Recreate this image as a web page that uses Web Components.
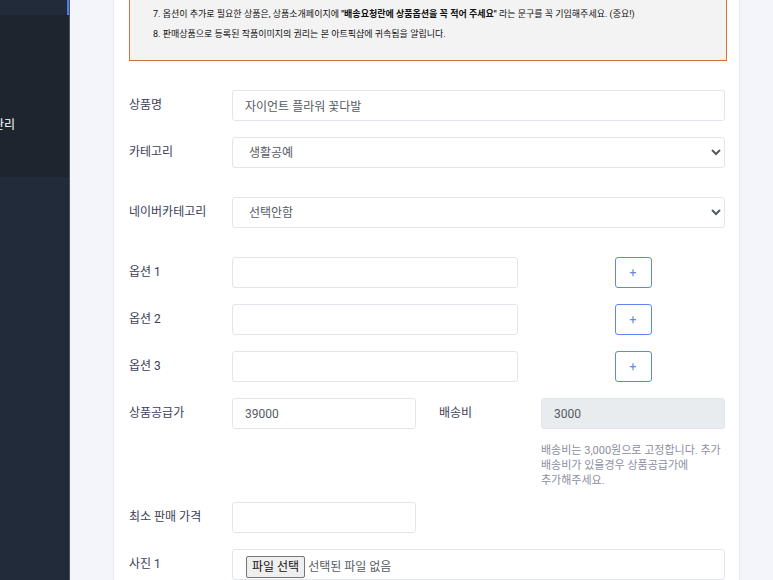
<!DOCTYPE html>
<html lang="ko">
<head>
<meta charset="utf-8">
<meta name="viewport" content="width=device-width, initial-scale=1">
<title>상품 등록</title>
<style>
    body {
        margin: 0;
        background: #f3f5fa;
        color: #495057;
        font-family: Roboto, "Noto Sans CJK KR", sans-serif;
        font-size: 12px;
    }
</style>
</head>
<body>
<admin-layout>
    <side-menu slot="menu">관리</side-menu>
    <notice-box>
        <p>7. 옵션이 추가로 필요한 상품은, 상품소개페이지에 <b>"배송요청란에 상품옵션을 꼭 적어 주세요"</b> 라는 문구를 꼭 기입해주세요. (중요!)</p>
        <p>8. 판매상품으로 등록된 작품이미지의 권리는 본 아트픽샵에 귀속됨을 알립니다.</p>
    </notice-box>
    <product-form></product-form>
</admin-layout>

<script>
class AdminLayout extends HTMLElement {
    constructor() {
        super();
        this.attachShadow({ mode: 'open' });
        this.shadowRoot.innerHTML = `
        <style>
            :host {
                display: flex;
                min-height: 100vh;
            }

            main {
                flex: 1;
                min-width: 0;
                padding: 0 33px 0 43px;
            }

            .card {
                min-height: 100vh;
                box-sizing: border-box;
                padding: 0 12px 0 15px;
                background: #fff;
                border: 1px solid #e6eaf2;
                border-width: 0 1px;
            }
        </style>

        <slot name="menu"></slot>
        <main>
            <div class="card"><slot></slot></div>
        </main>
`
    }
}

class SideMenu extends HTMLElement {
    constructor() {
        super();
        this.attachShadow({ mode: 'open' });
        this.shadowRoot.innerHTML = `
        <style>
            :host {
                display: block;
                flex: none;
                width: 69px;
                overflow: hidden;
                background: #222b3a;
                border-right: 1px solid #4b515c;
            }

            .active {
                height: 15px;
                border-right: 2px solid #4c7cf0;
            }

            .submenu {
                display: flex;
                justify-content: flex-end;
                padding: 101px 54px 42px 0;
                background: #1e252f;
            }

            a {
                color: #fff;
                line-height: 19px;
                text-decoration: none;
                white-space: nowrap;
            }
        </style>

        <div class="active"></div>
        <nav class="submenu"><a href="#"><slot></slot></a></nav>
`
    }
}

class NoticeBox extends HTMLElement {
    constructor() {
        super();
        this.attachShadow({ mode: 'open' });
        this.shadowRoot.innerHTML = `
        <style>
            :host {
                display: block;
                padding: 4px 23px 16px;
                background: #f3f3f3;
                border: 1px solid #d0713a;
                border-top: 0;
                color: #111;
                font-size: 9px;
                line-height: 20px;
            }

            ::slotted(p) {
                margin: 0;
            }
        </style>

        <slot></slot>
`
    }
}

// type: text (default), select, file
class FormField extends HTMLElement {
    constructor() {
        super();
        this.attachShadow({ mode: 'open' });
    }

    connectedCallback() {
        const label = this.getAttribute('label');
        this.shadowRoot.innerHTML = `
        <style>
            :host {
                display: grid;
                grid-column: span 4;
                grid-template-columns: subgrid;
                align-items: start;
            }

            :host([half]) {
                grid-column: span 2;
            }

            :host([spaced]) {
                margin-bottom: 13px;
            }

            .label {
                color: #3c4058;
                line-height: 31px;
                white-space: nowrap;
            }

            .control {
                grid-column: 2 / -1;
                min-width: 0;
            }

            :host([action]) .control {
                grid-column: 2 / 4;
            }

            :host([short]) .control {
                grid-column: 2 / 3;
            }

            input[type=text], select, .file {
                box-sizing: border-box;
                display: block;
                width: 100%;
                height: 31px;
                margin: 0;
                padding: 0 12px;
                background: #fff;
                border: 1px solid #e2e5ec;
                border-radius: 3px;
                color: #545b62;
                font: inherit;
            }

            select {
                padding-right: 0;
            }

            input[type=text]:disabled {
                background: #e9ecef;
            }

            .file {
                display: flex;
                align-items: flex-end;
                gap: 3px;
                padding: 0 13px 1px;
                line-height: 20px;
            }

            .file input {
                position: absolute;
                width: 1px;
                height: 1px;
                opacity: 0;
            }

            .choose {
                padding: 0 5px;
                background: #efefef;
                border: 1px solid #767676;
                border-radius: 2px;
                color: #111;
            }

            .status {
                padding-bottom: 1px;
            }
        </style>

        <label class="label" for="field">${label}</label>
        <div class="control">${this.control()}<slot name="help"></slot></div>
        <slot></slot>
`
    }

    control() {
        const value = this.getAttribute('value') || '';
        switch (this.getAttribute('type')) {
            case 'select':
                return `<select id="field"><option>${value}</option></select>`;
            case 'file':
                return `<div class="file"><input type="file" id="field"><label class="choose" for="field">파일 선택</label><span class="status">선택된 파일 없음</span></div>`;
            default:
                return `<input type="text" id="field" value="${value}"${this.hasAttribute('disabled') ? ' disabled' : ''}>`;
        }
    }
}

class AddButton extends HTMLElement {
    constructor() {
        super();
        this.attachShadow({ mode: 'open' });
        this.shadowRoot.innerHTML = `
        <style>
            :host {
                display: block;
                justify-self: center;
            }

            button {
                display: block;
                width: 37px;
                height: 31px;
                padding: 0;
                background: #fff;
                border: 1px solid #5d87ec;
                border-radius: 3px;
                color: #6484e8;
                font: inherit;
            }
        </style>

        <button type="button">+</button>
`
    }
}

class ProductForm extends HTMLElement {
    constructor() {
        super();
        this.attachShadow({ mode: 'open' });
        this.shadowRoot.innerHTML = `
        <style>
            :host {
                display: block;
                padding: 29px 2px 0 0;
            }

            form {
                display: grid;
                grid-template-columns: 80fr 184fr 79fr 184fr;
                gap: 16px 23px;
            }

            .help {
                margin: 14px 0 -2px;
                color: #8b8fa3;
                font-size: 11px;
                line-height: 15px;
                word-break: keep-all;
            }
        </style>

        <form>
            <form-field label="상품명" value="자이언트 플라워 꽃다발"></form-field>
            <form-field label="카테고리" type="select" value="생활공예" spaced></form-field>
            <form-field label="네이버카테고리" type="select" value="선택안함" spaced></form-field>
            <form-field label="옵션 1" action><add-button></add-button></form-field>
            <form-field label="옵션 2" action><add-button></add-button></form-field>
            <form-field label="옵션 3" action><add-button></add-button></form-field>
            <form-field label="상품공급가" value="39000" half></form-field>
            <form-field label="배송비" value="3000" half disabled>
                <p class="help" slot="help">배송비는 3,000원으로 고정합니다. 추가 배송비가 있을경우 상품공급가에 추가해주세요.</p>
            </form-field>
            <form-field label="최소 판매 가격" short></form-field>
            <form-field label="사진 1" type="file"></form-field>
        </form>
`
    }
}

customElements.define('admin-layout', AdminLayout);
customElements.define('side-menu', SideMenu);
customElements.define('notice-box', NoticeBox);
customElements.define('form-field', FormField);
customElements.define('add-button', AddButton);
customElements.define('product-form', ProductForm);
</script>
</body>
</html>
